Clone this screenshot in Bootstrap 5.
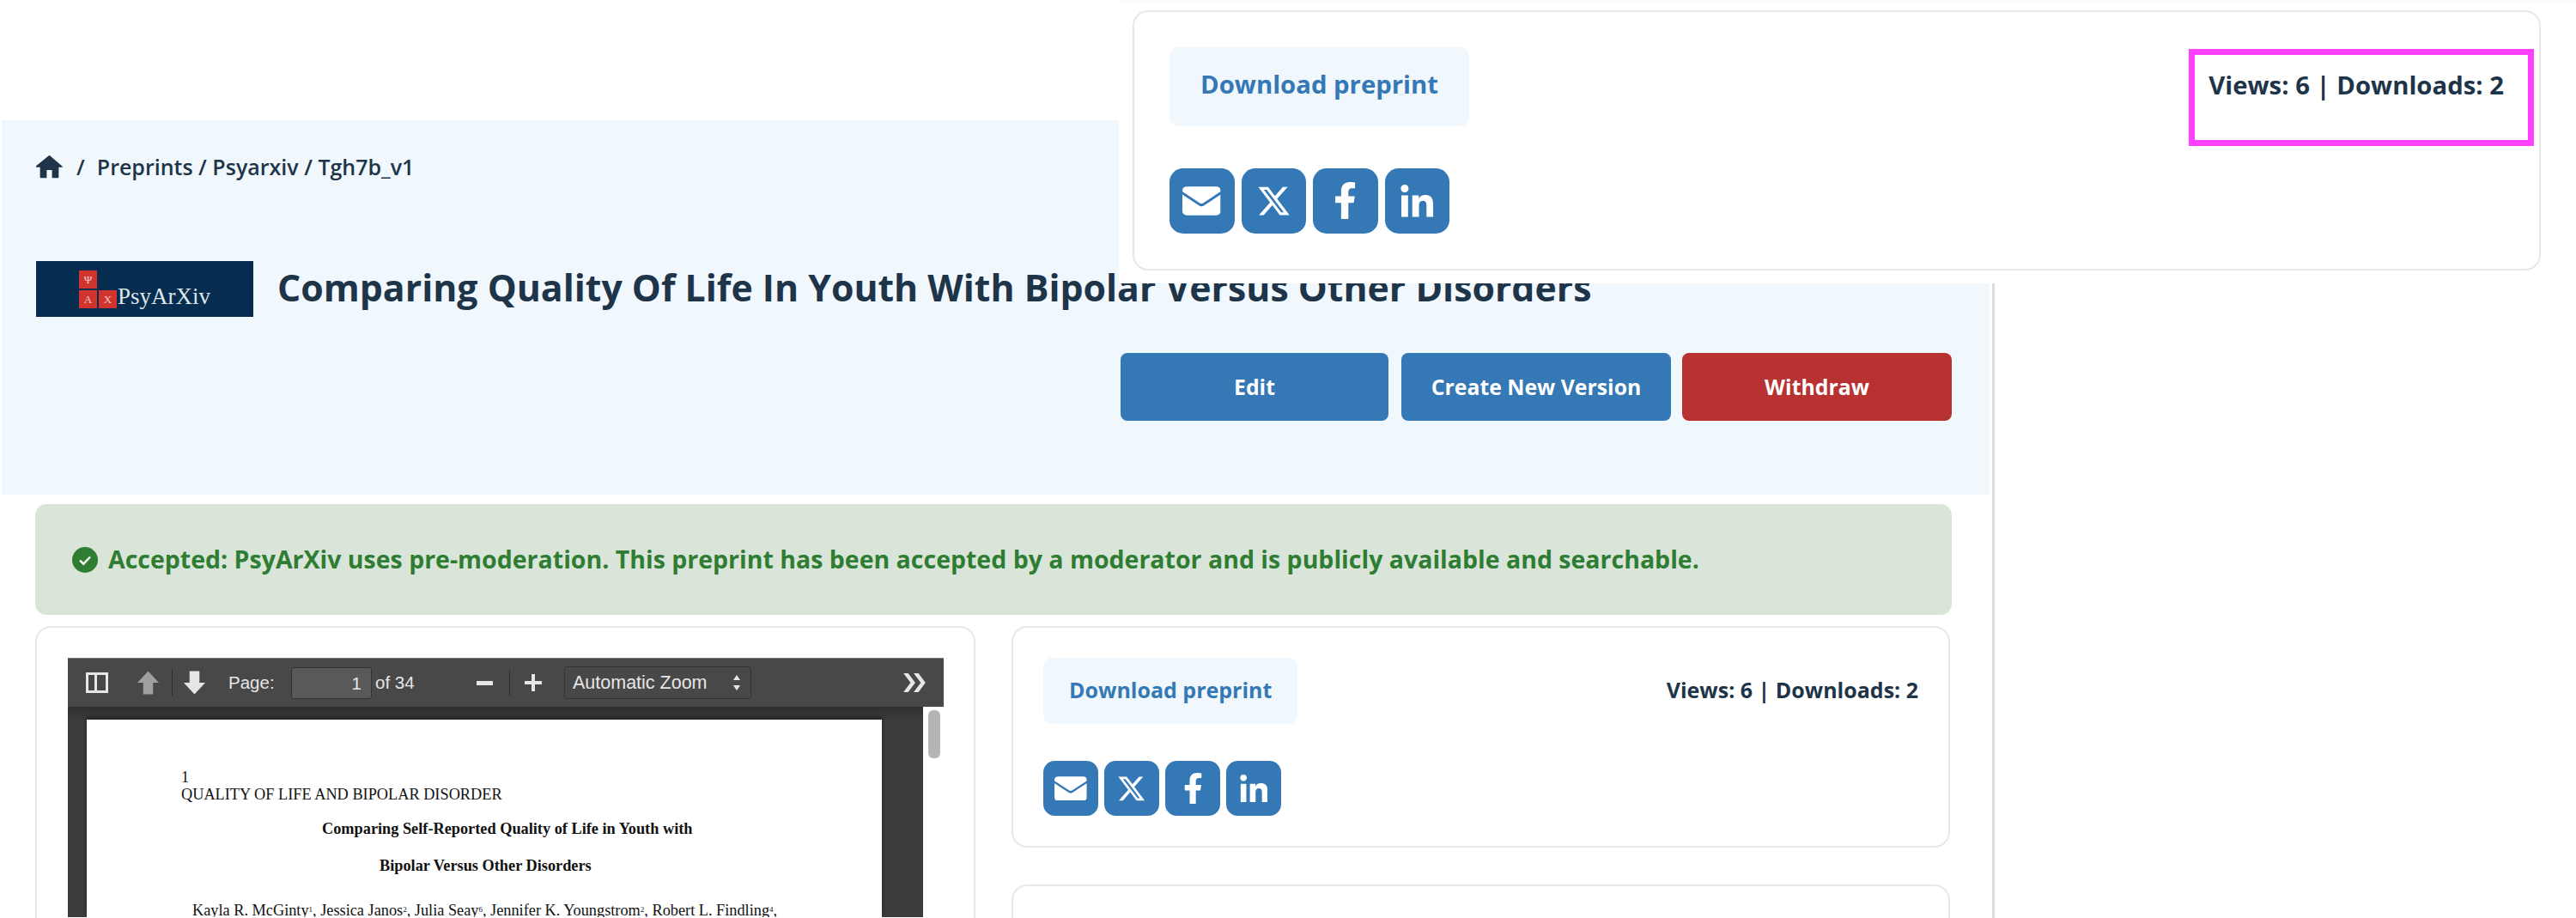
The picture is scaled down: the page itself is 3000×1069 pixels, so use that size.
<!DOCTYPE html>
<html lang="en">
<head>
    <meta charset="UTF-8">
    <meta name="viewport" content="width=device-width, initial-scale=1">
    <title>Preprint</title>
    <link href="https://cdn.jsdelivr.net/npm/bootstrap@5.3.0/dist/css/bootstrap.min.css" rel="stylesheet">
    <style>
        html, body {
            height: 1069px;
            overflow: hidden;
            background: #fff;
        }
        body {
            position: relative;
            font-family: "Open Sans", sans-serif;
            color: #1e3448;
        }
        .page-shell {
            width: 2321px;
            height: 929px;
            margin: 140px 0 0 2px;
            border-right: 3px solid #dcdcdc;
            overflow: hidden;
        }
        .hero {
            height: 436px;
            padding: 38px 40px 0;
            background: #f0f7fd;
            margin-right: 3px;
        }
        .crumbs {
            height: 32px;
            font-size: 25px;
            font-weight: 600;
            line-height: 32px;
        }
        .crumbs svg { width: 31px; height: 28px; fill: #1e3448; margin-right: 16px; }
        .crumbs .slash { margin-right: 14px; }
        .title-row { margin-top: 94px; height: 65px; }
        .title-row h1 {
            margin: 0 0 3px 28px;
            font-size: 42.8px;
            font-weight: 700;
            color: #1e3448;
        }
        .logo-box {
            width: 253px;
            height: 65px;
            flex: none;
            padding: 9px 0 10px 50px;
            background: #062c4f;
        }
        .logo-cells {
            display: grid;
            grid-template-columns: 21px 21px;
            grid-template-rows: 21px 21px;
            gap: 2px;
            margin-right: 1px;
        }
        .logo-cells span {
            background: #d0342c;
            color: #f3cfcc;
            font: 13px/21px "Liberation Serif", serif;
            text-align: center;
        }
        .logo-cells i { display: block; }
        .logo-word {
            font: 27px/27px "Liberation Serif", serif;
            color: #dfe6ea;
        }
        .hero-actions { margin-top: 42px; margin-right: 4px; gap: 13px; }
        .hero-btn {
            height: 79px;
            border: 0;
            border-radius: 8px;
            color: #fff;
            font-size: 24.800px;
            font-weight: 700;
        }
        .hero-btn-blue { background: #3478b5; }
        .hero-btn-blue:hover { background: #3478b5; color: #fff; }
        .hero-btn-red { background: #b83232; }
        .hero-btn-red:hover { background: #b83232; color: #fff; }
        .w-edit { width: 312px; margin-right: 2px; }
        .w-new { width: 314px; }
        .w-out { width: 314px; }
        .content-area { padding: 11px 47px 0 39px; }
        .state-note {
            height: 129px;
            padding-left: 43px;
            border-radius: 13px;
            background: #dae5da;
            color: #2e7d32;
            font-size: 28.500px;
            font-weight: 700;
            gap: 12px;
        }
        .state-note svg { width: 30px; height: 30px; flex: none; }
        .cols {
            display: grid;
            grid-template-columns: 1095px 1093px;
            gap: 42px;
            margin-top: 13px;
        }
        .soft-card {
            border: 2px solid #e8e8e8;
            border-radius: 18px;
            background: #fff;
        }
        .pdf-card { height: 400px; padding: 35px 35px 0 36px; }
        .pdf-view { height: 302px; background: #3c3c3c; overflow: hidden; }
        .pdf-bar {
            height: 57px;
            background: #484848;
            border-top: 1px solid #777;
            box-shadow: 0 1px 0 #333;
            color: #e6e6e6;
            font: 20.500px "Liberation Sans", sans-serif;
        }
        .pdf-bar svg { flex: none; fill: #e6e6e6; }
        .pdf-sep { width: 1px; height: 30px; background: #2c2c2c; flex: none; }
        .pdf-input {
            width: 94px;
            height: 37px;
            flex: none;
            padding-right: 11px;
            border: 1px solid #333;
            border-radius: 3px;
            background: #595959;
            text-align: right;
            line-height: 35px;
        }
        .pdf-select {
            width: 218px;
            height: 38px;
            flex: none;
            padding: 0 11px 0 9px;
            border: 1px solid #333;
            border-radius: 3px;
            line-height: 36px;
            font-size: 21.500px;
        }
        .pdf-body {
            height: 245px;
            padding: 15px 0 0 22px;
            background: linear-gradient(#2f2f2f, #3c3c3c 16px);
        }
        .pdf-sheet {
            width: 926px;
            height: 230px;
            flex: none;
            padding: 57px 0 0 110px;
            background: #fff;
            color: #111;
            font: 18.300px/20px "Liberation Serif", serif;
            box-shadow: 0 -3px 5px #222;
        }
        .pdf-sheet p { margin: 0; white-space: nowrap; }
        .pdf-sheet .thesis { margin-top: 20px; font-weight: 700; padding-left: 164px; }
        .pdf-sheet .thesis2 { margin-top: 23px; font-weight: 700; padding-left: 231px; }
        .pdf-sheet .names { margin-top: 32px; padding-left: 13px; }
        .pdf-sheet sup { font-size: 9px; }
        .pdf-track {
            width: 24px;
            flex: none;
            margin-left: 48px;
            margin-top: -15px;
            padding: 4px 4px 0 6px;
            background: #fff;
        }
        .pdf-thumb { height: 56px; margin-top: 0; border-radius: 6px; background: #b5b5b5; }
        .info-card { height: 258px; padding: 35px 35px 0; }
        .next-card { height: 60px; margin-top: 43px; }
        .dl-btn {
            height: 77px;
            padding: 0 30px 3px;
            border: 0;
            border-radius: 10px;
            background: #f0f7fd;
            color: #3478b5;
            font-size: 25px;
            font-weight: 700;
            line-height: 74px;
        }
        .dl-btn:hover { background: #f0f7fd; color: #3478b5; }
        .stat-line { font-size: 25px; font-weight: 700; line-height: 74px; }
        .share-row { margin-top: 43px; gap: 7px; font-size: 64px; }
        .share-btn {
            width: 1em;
            height: 1em;
            border-radius: .21em;
            background: #3478b5;
        }
        .share-btn svg { fill: #fff; }
        .ico-mail { width: .59em; height: .45em; }
        .ico-x { width: .49em; height: .48em; }
        .ico-f { width: .355em; height: .57em; }
        .ico-in { width: .51em; height: .5em; }
        /* pasted zoomed copy of the card, over the page */
        .zoom-patch {
            position: absolute;
            left: 1303px;
            top: 0;
            width: 1697px;
            height: 330px;
            background: #fff;
            box-shadow: inset 0 3px 0 #fbfbfb;
        }
        .zoom-card {
            position: absolute;
            left: 16px;
            top: 12px;
            width: 1640px;
            height: 303px;
            padding: 41px 41px 0 41px;
        }
        .zoom-card .dl-btn {
            height: 92px;
            padding: 0 36px 5px;
            font-size: 29.300px;
            line-height: 87px;
        }
        .zoom-card .stat-line { font-size: 29.300px; line-height: 88px; }
        .zoom-card .share-row { margin-top: 49px; gap: 8px; font-size: 75.500px; }
        .pink-frame {
            position: absolute;
            left: 1228px;
            top: 43px;
            width: 402px;
            height: 113px;
            border: 7px solid #ff40ff;
        }
    </style>
</head>
<body>
<svg width="0" height="0" class="position-absolute">
    <symbol id="i-mail" viewBox="0 0 45 34">
        <path d="M5 0h35a5 5 0 0 1 5 5v1L24.500 19.500a4 4 0 0 1-4 0L0 6V5a5 5 0 0 1 5-5z"/>
        <path d="M0 9.500l19 12.500a6 6 0 0 0 7 0l19-12.500V29a5 5 0 0 1-5 5H5a5 5 0 0 1-5-5z"/>
    </symbol>
    <symbol id="i-x" viewBox="1 2 22 20">
        <path d="M18.244 2.250h3.308l-7.227 8.260 8.502 11.240H16.170l-5.214-6.817L4.990 21.750H1.680l7.730-8.835L1.254 2.250H8.080l4.713 6.231zm-1.161 17.520h1.833L7.084 4.126H5.117z"/>
    </symbol>
    <symbol id="i-f" viewBox="22 0 272 512">
        <path d="M279.140 288l14.220-92.660h-88.910v-60.130c0-25.350 12.420-50.060 52.240-50.060h40.420V6.260S260.430 0 225.360 0c-73.220 0-121.080 44.380-121.080 124.720v70.620H22.890V288h81.390v224h100.170V288z"/>
    </symbol>
    <symbol id="i-in" viewBox="0 0 448 448">
        <path d="M100.280 448H7.400V148.900h92.880zM53.790 108.100C24.090 108.100 0 83.500 0 53.800a53.790 53.790 0 0 1 107.580 0c0 29.700-24.100 54.300-53.790 54.300zM447.900 448h-92.680V302.400c0-34.700-.7-79.200-48.290-79.200-48.290 0-55.690 37.700-55.690 76.700V448h-92.780V148.900h89.080v40.800h1.300c12.400-23.500 42.690-48.300 87.880-48.300 94 0 111.280 61.900 111.280 142.300V448z"/>
    </symbol>
</svg>

<div class="page-shell">
    <!-- Header -->
    <div class="hero">
        <div class="crumbs d-flex align-items-center">
            <svg viewBox="2 3 20 17"><path d="M10 20v-6h4v6h4.500a.5.500 0 0 0 .5-.5V12h2.500a.4.400 0 0 0 .3-.7L12 3 1.700 11.300a.4.400 0 0 0 .3.700H5v7.500a.5.500 0 0 0 .5.500z"/></svg>
            <span class="slash">/</span>
            <span>Preprints / Psyarxiv / Tgh7b_v1</span>
        </div>
        <div class="title-row d-flex align-items-center">
            <div class="logo-box d-flex align-items-end">
                <div class="logo-cells">
                    <span>&Psi;</span><i></i>
                    <span>&Alpha;</span><span>&Chi;</span>
                </div>
                <div class="logo-word">PsyArXiv</div>
            </div>
            <h1 class="text-nowrap">Comparing Quality Of Life In Youth With Bipolar Versus Other Disorders</h1>
        </div>
        <div class="hero-actions d-flex justify-content-end">
            <button class="btn hero-btn hero-btn-blue w-edit">Edit</button>
            <button class="btn hero-btn hero-btn-blue w-new">Create New Version</button>
            <button class="btn hero-btn hero-btn-red w-out">Withdraw</button>
        </div>
    </div>

    <div class="content-area">
        <div class="state-note d-flex align-items-center">
            <svg viewBox="0 0 30 30"><circle cx="15" cy="15" r="15" fill="#2e7d32"/><path d="M9 15.500l4.200 4.200L21 11.500" fill="none" stroke="#fff" stroke-width="2.400"/></svg>
            <span class="text-nowrap">Accepted: PsyArXiv uses pre-moderation. This preprint has been accepted by a moderator and is publicly available and searchable.</span>
        </div>

        <div class="cols">
            <!-- PDF viewer -->
            <div class="soft-card pdf-card">
                <div class="pdf-view">
                    <div class="pdf-bar d-flex align-items-center">
                        <svg style="margin-left:21px" width="26" height="24" viewBox="0 0 26 24"><path fill-rule="evenodd" d="M0 0h26v24H0zM3 3v18h7V3zm10 0v18h10V3z"/></svg>
                        <svg style="margin-left:34px;opacity:.55" width="25" height="28" viewBox="0 0 26 28"><path d="M13 0l13 14h-7v14H7V14H0z"/></svg>
                        <div class="pdf-sep" style="margin-left:15px"></div>
                        <svg style="margin-left:13px" width="25" height="28" viewBox="0 0 26 28"><path d="M13 28L0 14h7V0h12v14h7z"/></svg>
                        <span style="margin-left:27px;width:73px;flex:none">Page:</span>
                        <div class="pdf-input">1</div>
                        <span class="ms-1" style="width:118px;flex:none">of 34</span>
                        <svg width="19" height="5" viewBox="0 0 19 5"><path d="M0 0h19v5H0z"/></svg>
                        <div class="pdf-sep" style="margin-left:19px"></div>
                        <svg style="margin-left:17px" width="20" height="20" viewBox="0 0 20 20"><path d="M8 0h4v8h8v4h-8v8H8v-8H0V8h8z"/></svg>
                        <div class="pdf-select d-flex justify-content-between" style="margin-left:26px">
                            <span>Automatic Zoom</span>
                            <svg width="10" height="20" viewBox="0 0 10 20" class="align-self-center"><path d="M5 1l4 6H1zM5 19l4-6H1z"/></svg>
                        </div>
                        <svg style="margin-left:177px" width="26" height="22" viewBox="0 0 28 24"><path d="M0 0h6l9 12-9 12H0l9-12zM13 0h6l9 12-9 12h-6l9-12z"/></svg>
                    </div>
                    <div class="pdf-body d-flex">
                        <div class="pdf-sheet">
                            <p>1</p>
                            <p>QUALITY OF LIFE AND BIPOLAR DISORDER</p>
                            <p class="thesis">Comparing Self-Reported Quality of Life in Youth with</p>
                            <p class="thesis2">Bipolar Versus Other Disorders</p>
                            <p class="names">Kayla R. McGinty<sup>1</sup>, Jessica Janos<sup>2</sup>, Julia Seay<sup>6</sup>, Jennifer K. Youngstrom<sup>2</sup>, Robert L. Findling<sup>4</sup>,</p>
                        </div>
                        <div class="pdf-track"><div class="pdf-thumb"></div></div>
                    </div>
                </div>
            </div>

            <div>
                <div class="soft-card info-card">
                    <div class="d-flex justify-content-between">
                        <button class="btn dl-btn">Download preprint</button>
                        <div class="stat-line">Views: 6 | Downloads: 2</div>
                    </div>
                    <div class="share-row d-flex">
                        <a class="share-btn d-flex align-items-center justify-content-center" href="#"><svg class="ico-mail"><use href="#i-mail"/></svg></a>
                        <a class="share-btn d-flex align-items-center justify-content-center" href="#"><svg class="ico-x"><use href="#i-x"/></svg></a>
                        <a class="share-btn d-flex align-items-center justify-content-center" href="#"><svg class="ico-f"><use href="#i-f"/></svg></a>
                        <a class="share-btn d-flex align-items-center justify-content-center" href="#"><svg class="ico-in"><use href="#i-in"/></svg></a>
                    </div>
                </div>
                <div class="soft-card next-card"></div>
            </div>
        </div>
    </div>
</div>

<!-- Enlarged copy of the download card with the stats framed -->
<div class="zoom-patch">
    <div class="soft-card zoom-card">
        <div class="d-flex justify-content-between">
            <button class="btn dl-btn">Download preprint</button>
            <div class="stat-line">Views: 6 | Downloads: 2</div>
        </div>
        <div class="share-row d-flex">
            <a class="share-btn d-flex align-items-center justify-content-center" href="#"><svg class="ico-mail"><use href="#i-mail"/></svg></a>
            <a class="share-btn d-flex align-items-center justify-content-center" href="#"><svg class="ico-x"><use href="#i-x"/></svg></a>
            <a class="share-btn d-flex align-items-center justify-content-center" href="#"><svg class="ico-f"><use href="#i-f"/></svg></a>
            <a class="share-btn d-flex align-items-center justify-content-center" href="#"><svg class="ico-in"><use href="#i-in"/></svg></a>
        </div>
        <div class="pink-frame"></div>
    </div>
</div>
<script src="https://cdn.jsdelivr.net/npm/bootstrap@5.3.0/dist/js/bootstrap.bundle.min.js"></script>
</body>
</html>
